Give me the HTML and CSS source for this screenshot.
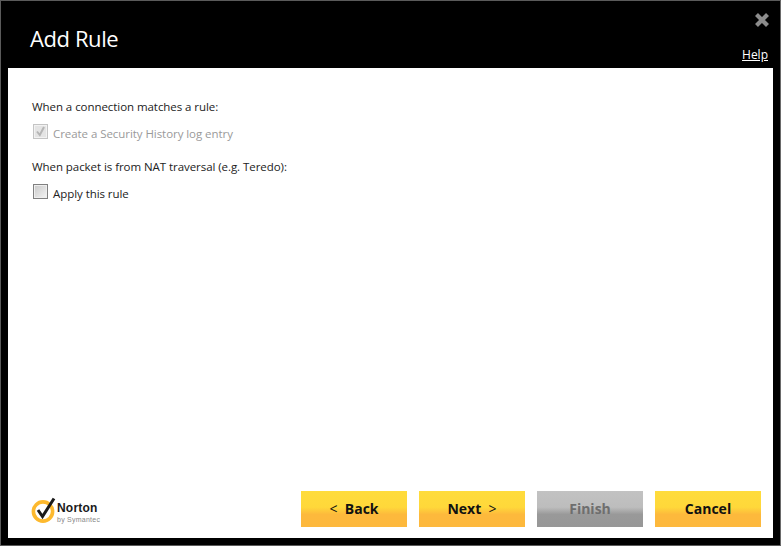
FILE: index.html
```html
<!DOCTYPE html>
<html lang="en">
<head>
    <meta charset="UTF-8">
    <title>Add Rule</title>
    <link rel="stylesheet" href="styles.css">
</head>
<body>
    <div class="window">
        <header class="title-bar">
            <h1 class="title">Add Rule</h1>
            <div class="title-tools">
                <svg class="close-icon" width="16" height="16" viewBox="0 0 16 16" aria-label="Close">
                    <path d="M2.5 2.5 L13.5 13.5 M13.5 2.5 L2.5 13.5" stroke="#8c8c8c" stroke-width="4.2" fill="none"/>
                </svg>
                <a class="help-link" href="#">Help</a>
            </div>
        </header>

        <main class="panel">
            <div class="options">
                <p class="option-label">When a connection matches a rule:</p>
                <label class="check-row check-disabled">
                    <span class="check-box">
                        <svg width="13" height="13" viewBox="0 0 13 13">
                            <path d="M3 6.5 L5.8 10 L10 2" stroke="#b5b5b5" stroke-width="2" fill="none"/>
                        </svg>
                    </span>
                    Create a Security History log entry
                </label>
                <p class="option-label">When packet is from NAT traversal (e.g. Teredo):</p>
                <label class="check-row">
                    <span class="check-box"></span>
                    Apply this rule
                </label>
            </div>

            <footer class="panel-footer">
                <div class="logo">
                    <svg width="26" height="28" viewBox="0 0 26 28">
                        <circle cx="12" cy="15.5" r="9.6" fill="none" stroke="#fdb92e" stroke-width="3.6"/>
                        <path d="M7 14 L11.5 20.5 L23 2.5" stroke="#1a1a1a" stroke-width="3" fill="none"/>
                    </svg>
                    <div class="logo-text">
                        <span class="logo-name">Norton</span>
                        <span class="logo-sub">by Symantec</span>
                    </div>
                </div>
                <div class="buttons">
                    <button class="btn" type="button">&lt;&nbsp; <b>Back</b></button>
                    <button class="btn" type="button"><b>Next</b>&nbsp; &gt;</button>
                    <button class="btn btn-disabled" type="button"><b>Finish</b></button>
                    <button class="btn" type="button"><b>Cancel</b></button>
                </div>
            </footer>
        </main>
    </div>
</body>
</html>
```

FILE: styles.css
```css
/* Dialog frame */
body {
    margin: 0;
    background-color: #000;
    font-family: "Open Sans", "Noto Sans", sans-serif;
}

.window {
    box-sizing: border-box;
    width: 781px;
    height: 546px;
    display: flex;
    flex-direction: column;
    background-color: #000;
    border: 1px solid #5a5a5a;
    border-right-color: #6a6a6a;
}

.title-bar {
    height: 67px;
    flex-shrink: 0;
    display: flex;
    justify-content: space-between;
    padding: 0 12px 0 29px;
}

.title {
    margin: 22px 0 0;
    color: #fff;
    font-size: 22px;
    font-weight: 400;
    letter-spacing: -0.4px;
    line-height: 30px;
}

.title-tools {
    display: flex;
    flex-direction: column;
    align-items: flex-end;
    padding-top: 11px;
}

.close-icon {
    display: block;
    margin-right: -2px;
}

.help-link {
    margin-top: 18px;
    color: #fff;
    font-size: 12px;
    line-height: 17px;
}

/* White content area */
.panel {
    flex: 1;
    display: flex;
    flex-direction: column;
    justify-content: space-between;
    margin: 0 7px 7px;
    background-color: #fff;
}

.options {
    padding: 30px 24px 0;
}

.option-label {
    margin: 0;
    color: #222;
    font-size: 11.5px;
    letter-spacing: -0.06px;
    line-height: 17px;
}

.check-row {
    display: flex;
    align-items: center;
    gap: 5px;
    height: 16px;
    margin: 10px 0 17px 1px;
    color: #222;
    font-size: 11.5px;
    letter-spacing: -0.06px;
}

.check-box {
    box-sizing: border-box;
    width: 15px;
    height: 15px;
    margin-bottom: 4px;
    display: flex;
    align-items: center;
    justify-content: center;
    background: linear-gradient(135deg, #c8c8c8, #f4f4f4);
    border: 1px solid #808080;
    box-shadow: inset 0 0 0 1px #eee;
}

.check-disabled {
    color: #9a9a9a;
}

.check-disabled .check-box {
    background: #e4e4e4;
    border-color: #c4c4c4;
    box-shadow: inset 0 0 0 1px #f2f2f2;
}

/* Footer with logo and buttons */
.panel-footer {
    display: flex;
    justify-content: space-between;
    align-items: flex-end;
    padding: 0 12px 11px 23px;
}

.logo {
    display: flex;
    align-items: center;
    height: 30px;
    margin-bottom: 2px;
}

.logo-text {
    display: flex;
    flex-direction: column;
    gap: 1px;
    margin-top: 4px;
    font-family: "Liberation Sans", sans-serif;
}

.logo-name {
    color: #1a1a1a;
    font-size: 12px;
    font-weight: 700;
    line-height: 14px;
    letter-spacing: 0.2px;
}

.logo-sub {
    color: #888;
    font-size: 7px;
    line-height: 8px;
    letter-spacing: 0.25px;
}

.buttons {
    display: flex;
    gap: 12px;
}

.btn {
    width: 106px;
    height: 36px;
    padding: 0 0 1px;
    border: 0;
    color: #111;
    font-family: inherit;
    font-size: 14px;
    background: linear-gradient(#ffdc3c 0%, #ffd83a 45%, #fdb93c 65%, #fdb83c 100%);
}

.btn-disabled {
    color: #6e6e6e;
    background: linear-gradient(#c2c2c2 0%, #bdbdbd 45%, #999 65%, #979797 100%);
}
```
